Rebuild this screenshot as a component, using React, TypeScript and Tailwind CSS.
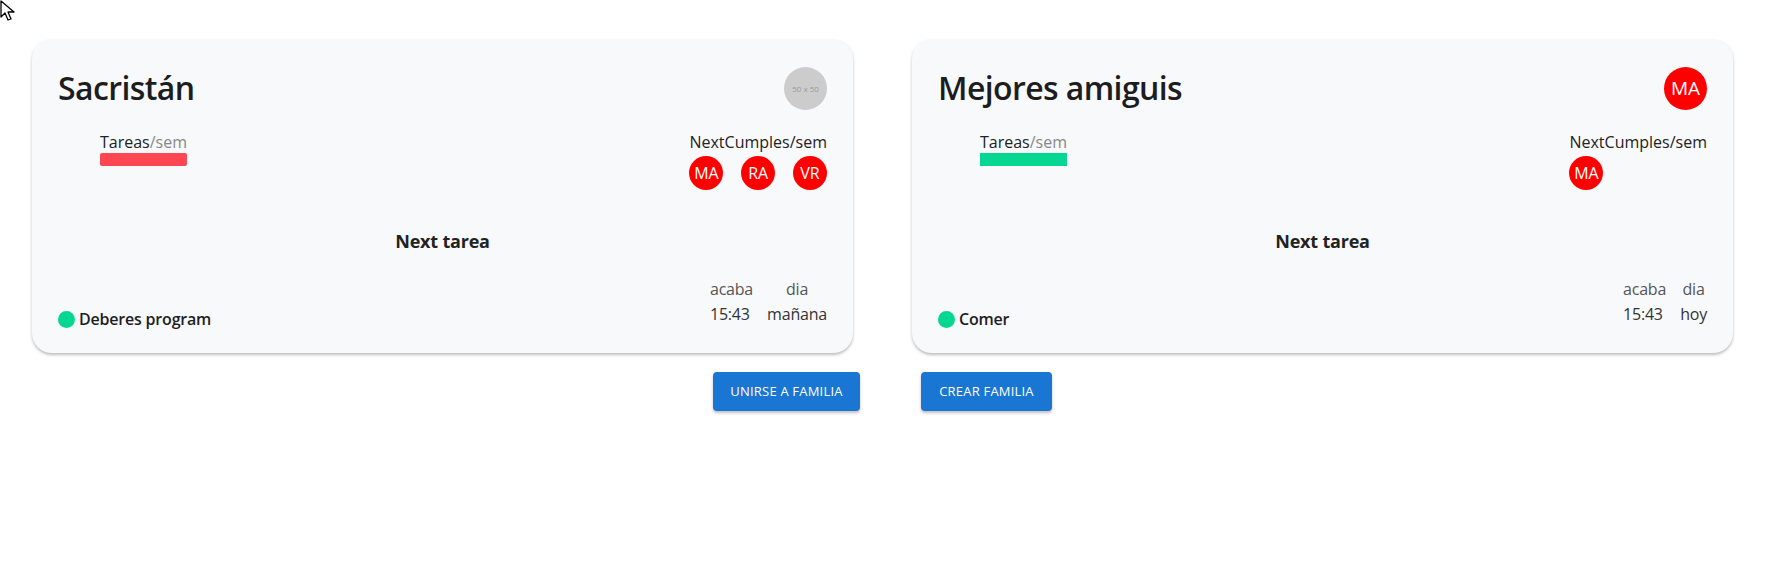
interface Familia {
  name: string;
  avatar: string | null;
  barColor: string;
  barRounded: boolean;
  cumples: string[];
  tarea: string;
  hora: string;
  dia: string;
}

const familias: Familia[] = [
  {
    name: "Sacristán",
    avatar: null,
    barColor: "bg-[#ff4753]",
    barRounded: true,
    cumples: ["MA", "RA", "VR"],
    tarea: "Deberes program",
    hora: "15:43",
    dia: "mañana",
  },
  {
    name: "Mejores amiguis",
    avatar: "MA",
    barColor: "bg-[#05d690]",
    barRounded: false,
    cumples: ["MA"],
    tarea: "Comer",
    hora: "15:43",
    dia: "hoy",
  },
];

function FamiliaCard({ f }: { f: Familia }) {
  return (
    <div className="w-[821px] h-[314px] bg-[#f8f9fb] rounded-[20px] shadow-[0_2px_3px_rgba(0,0,0,0.25)] px-[26px] pt-[20px] pb-[26px] flex flex-col">
      <div className="flex items-start justify-between">
        <h2 className="text-[32px] font-semibold text-[#1d1d1f] leading-[40px] mt-[9px] tracking-[-0.6px]">{f.name}</h2>
        {f.avatar ? (
          <div className="w-[43px] h-[43px] mt-[8px] rounded-full bg-[#ff0000] text-white text-[19px] flex items-center justify-center">
            {f.avatar}
          </div>
        ) : (
          <div className="w-[43px] h-[43px] mt-[8px] rounded-full bg-[#cccccc] text-[#9a9a9a] text-[8px] flex items-center justify-center">
            50 x 50
          </div>
        )}
      </div>

      <div className="flex justify-between mt-[22px]">
        <div className="ml-[42px]">
          <p className="text-[16px] leading-[20px] text-[#222]">
            Tareas<span className="text-[#888]">/sem</span>
          </p>
          <div className={`h-[13px] mt-[1px] ${f.barColor} ${f.barRounded ? "rounded-[2px]" : ""}`} />
        </div>
        <div>
          <p className="text-[16px] leading-[20px] text-[#222]">NextCumples/sem</p>
          <div className="flex justify-between mt-[4px]">
            {f.cumples.map((c) => (
              <div key={c} className="w-[34px] h-[34px] rounded-full bg-[#ff0000] text-white text-[16px] flex items-center justify-center">
                {c}
              </div>
            ))}
          </div>
        </div>
      </div>

      <h3 className="text-center text-[18px] font-bold text-[#222] mt-[38px] tracking-[-0.2px]">Next tarea</h3>

      <div className="flex items-end justify-between mt-auto">
        <div className="flex items-center gap-[4px] mb-[-4px]">
          <span className="w-[17px] h-[17px] rounded-full bg-[#05d690]" />
          <span className="text-[16px] font-semibold text-[#1d1d1f] tracking-[-0.2px]">{f.tarea}</span>
        </div>
        <div className="grid grid-cols-[auto_auto] gap-x-[14px] text-[16px] leading-[25px] text-[#333] tracking-[-0.2px]">
          <span className="text-[#555]">acaba</span>
          <span className="text-center text-[#555]">dia</span>
          <span>{f.hora}</span>
          <span className="text-center">{f.dia}</span>
        </div>
      </div>
    </div>
  );
}

export default function App() {
  return (
    <div className="w-[1765px] min-h-[572px] bg-white font-['Open_Sans',sans-serif] relative">
      <svg className="absolute left-0 top-0" width="16" height="22" viewBox="0 0 16 22">
        <path d="M1 1 L1 17 L5 13 L8 20 L11 19 L8 12 L14 12 Z" fill="white" stroke="black" strokeWidth="1.3" strokeLinejoin="round" />
      </svg>
      <div className="flex justify-between px-[32px] pt-[39px]">
        {familias.map((f) => (
          <FamiliaCard key={f.name} f={f} />
        ))}
      </div>
      <div className="flex justify-center gap-[61px] mt-[19px]">
        <button className="h-[39px] w-[147px] rounded-[4px] bg-[#1976d2] text-white text-[13px] font-medium uppercase tracking-[0.2px] shadow-[0_2px_3px_rgba(0,0,0,0.25)]">
          Unirse a familia
        </button>
        <button className="h-[39px] w-[131px] rounded-[4px] bg-[#1976d2] text-white text-[13px] font-medium uppercase tracking-[0.2px] shadow-[0_2px_3px_rgba(0,0,0,0.25)]">
          Crear familia
        </button>
      </div>
    </div>
  );
}
